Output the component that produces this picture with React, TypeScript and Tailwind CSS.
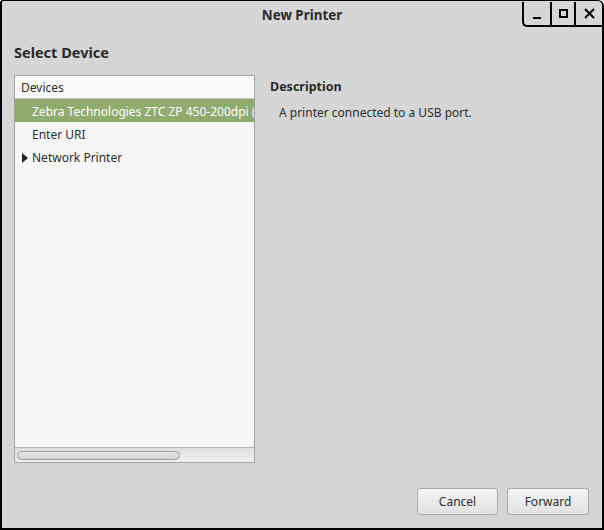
import React from 'react';

const font = { fontFamily: '"Noto Sans", "Open Sans", sans-serif' };

const devices = [
    { label: 'Zebra Technologies ZTC ZP 450-200dpi (USB)', selected: true, expander: false },
    { label: 'Enter URI', selected: false, expander: false },
    { label: 'Network Printer', selected: false, expander: true },
];

const TitleButtons: React.FC = () => (
    <div className="flex h-[25px] self-start border-b-2 border-l-2 border-black rounded-bl-[5px] mt-[1px] bg-[#d6d6d6]">
        <div className="w-[28px] flex items-end justify-center pb-[6px] border-r-2 border-black">
            <div className="w-[8px] h-[2px] bg-black" />
        </div>
        <div className="w-[24px] flex items-center justify-center border-r-2 border-black">
            <div className="w-[9px] h-[9px] border-2 border-black" />
        </div>
        <div className="w-[26px] flex items-center justify-center">
            <svg width="11" height="11" viewBox="0 0 11 11">
                <path d="M1 1 L10 10 M10 1 L1 10" stroke="#000" strokeWidth="2" />
            </svg>
        </div>
    </div>
);

const App: React.FC = () => {
    return (
        <div
            className="w-[604px] h-[530px] bg-[#d6d6d6] border-x-2 border-b-2 border-t border-black rounded-tl-[3px] rounded-tr-[6px] flex flex-col text-[#2d2d2d] overflow-hidden"
            style={font}
        >
            {/* title bar */}
            <div className="grid grid-cols-[1fr_auto_1fr] h-[27px] shrink-0">
                <div />
                <div className="pt-[4px] text-[13.4px] font-bold text-[#2a2a2a]">New Printer</div>
                <div className="flex justify-end">
                    <TitleButtons />
                </div>
            </div>

            <div className="flex-1 flex flex-col px-[12px] pb-[13px]">
                <h2 className="text-[14.5px] font-bold mt-[14px] leading-[20px] text-[#2a2a2a]">Select Device</h2>

                <div className="flex flex-1 mt-[13px] gap-[15px]">
                    {/* device list */}
                    <div className="w-[241px] h-[388px] border border-[#a2a2a2] bg-[#f7f7f7] flex flex-col">
                        <div className="h-[23px] border-b border-[#c4c4c4] bg-[#f9f9f9] px-[6px] pt-[1px] text-[12px] leading-[22px]">
                            Devices
                        </div>
                        <div className="flex-1 overflow-hidden">
                            {devices.map((d, i) => (
                                <div
                                    key={i}
                                    className={
                                        'h-[23px] pt-[2px] flex items-center whitespace-nowrap text-[12px] ' +
                                        (d.selected ? 'bg-[#8fab6e] text-white' : '')
                                    }
                                >
                                    <div className="w-[17px] flex justify-center shrink-0 pl-[2px]">
                                        {d.expander && (
                                            <svg width="6" height="10" viewBox="0 0 6 10">
                                                <path d="M0 0 L6 5 L0 10 Z" fill="#222" />
                                            </svg>
                                        )}
                                    </div>
                                    <span>{d.label}</span>
                                </div>
                            ))}
                        </div>
                        <div className="h-[15px] border-t border-[#b4b4b4] bg-gradient-to-b from-[#dedede] to-[#f0f0f0] flex items-center px-[2px]">
                            <div className="w-[163px] h-[9px] rounded-full border border-[#9c9c9c] bg-gradient-to-b from-[#e6e6e6] to-[#d2d2d2]" />
                        </div>
                    </div>

                    {/* description */}
                    <div className="flex flex-col pt-[3px]">
                        <div className="text-[12.5px] font-bold leading-[18px] text-[#2a2a2a]">Description</div>
                        <div className="text-[12px] leading-[18px] mt-[8px] pl-[9px]">A printer connected to a USB port.</div>
                    </div>
                </div>

                <div className="flex justify-end gap-[9px] pr-[1px]">
                    <button className="w-[81px] h-[27px] rounded-[3px] border border-[#a8a8a8] bg-gradient-to-b from-[#f4f4f4] to-[#e2e2e2] text-[12px] text-[#2d2d2d]">
                        Cancel
                    </button>
                    <button className="w-[82px] h-[27px] rounded-[3px] border border-[#a8a8a8] bg-gradient-to-b from-[#f4f4f4] to-[#e2e2e2] text-[12px] text-[#2d2d2d]">
                        Forward
                    </button>
                </div>
            </div>
        </div>
    );
};

export default App;
